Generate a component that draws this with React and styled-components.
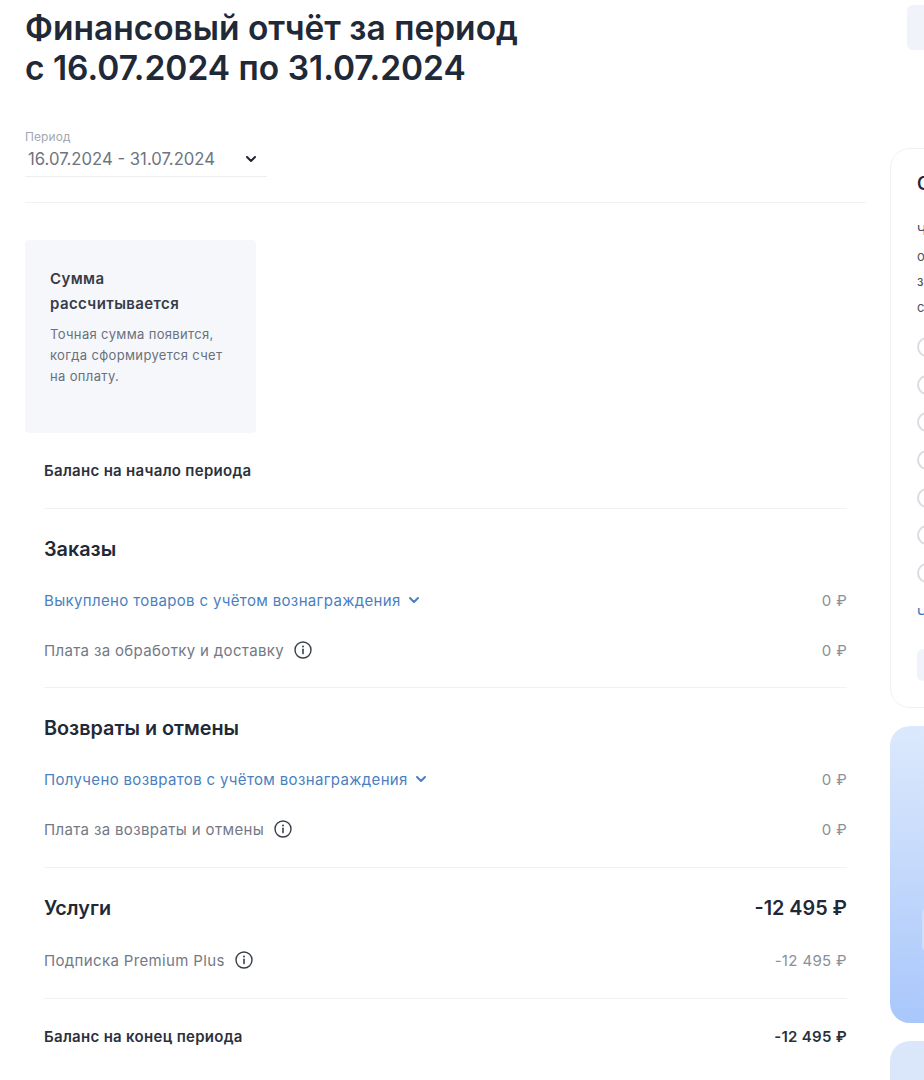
import React from "react";
import styled, { createGlobalStyle } from "styled-components";

const GlobalStyle = createGlobalStyle`
  html, body {
    margin: 0;
    padding: 0;
    background: #fff;
  }
  body {
    font-family: Inter, "Liberation Sans", sans-serif;
    color: #1f2633;
  }
  * {
    box-sizing: border-box;
  }
`;

const Page = styled.div`
  display: flex;
  width: 924px;
  height: 1080px;
  overflow: hidden;
`;

const Main = styled.main`
  flex: 0 0 841px;
  margin-left: 25px;
`;

const Title = styled.h1`
  margin: 8px 0 0;
  font-size: 33.5px;
  line-height: 40px;
  font-weight: 600;
  color: #1f2937;
`;

const PeriodSelect = styled.div`
  width: 242px;
  margin-top: 42px;
  padding-bottom: 7px;
  border-bottom: 1px solid #eceef2;
`;

const PeriodLabel = styled.div`
  font-size: 12px;
  line-height: 14px;
  letter-spacing: 0.1px;
  color: #a3a8b2;
`;

const PeriodValue = styled.div`
  display: flex;
  align-items: center;
  gap: 30px;
  padding-left: 3px;
  margin-top: 5px;
  font-size: 16.7px;
  line-height: 20px;
  color: #6d7480;
`;

const Divider = styled.div`
  height: 1px;
  background: #f1f2f5;
`;

const TopDivider = styled(Divider)`
  margin-top: 25px;
`;

const Notice = styled.div`
  width: 231px;
  height: 193px;
  margin-top: 37px;
  padding: 26px 25px;
  border-radius: 4px;
  background: #f5f7fb;
`;

const NoticeTitle = styled.div`
  font-size: 15px;
  line-height: 25px;
  font-weight: 600;
  letter-spacing: 0.4px;
  color: #363c48;
`;

const NoticeText = styled.div`
  margin-top: 8px;
  font-size: 13px;
  line-height: 21px;
  letter-spacing: 0.35px;
  color: #6a707c;
`;

const Section = styled.section`
  padding: 0 19px;
`;

const TotalRow = styled.div`
  display: flex;
  justify-content: space-between;
  align-items: center;
  height: 75px;
  font-size: 15px;
  font-weight: 600;
  letter-spacing: 0.3px;
  color: #2b313c;
`;

const SectionHead = styled.div`
  display: flex;
  justify-content: space-between;
  align-items: center;
  height: 41px;
  margin-top: 19.5px;
  font-size: 19.8px;
  font-weight: 600;
  color: #1f2937;
`;

const Rows = styled.div`
  padding: ${(p) => p.$top}px 0 ${(p) => p.$bottom}px;
`;

const Row = styled.div`
  display: flex;
  justify-content: space-between;
  align-items: center;
  height: 50px;
  font-size: 15px;
  letter-spacing: 0.35px;
  color: ${(p) => (p.$link ? "#4a7fc0" : "#737985")};
`;

const RowLabel = styled.span`
  display: inline-flex;
  align-items: center;
  gap: ${(p) => (p.$link ? 7 : 10)}px;
`;

const RowValue = styled.span`
  color: #8a909a;
`;

const Aside = styled.aside`
  flex: 0 0 300px;
  margin-left: 24px;
`;

const TopButton = styled.div`
  width: 200px;
  height: 45px;
  margin: 5px 0 0 17px;
  border-radius: 6px;
  background: #f0f3f9;
`;

const Card = styled.div`
  height: 560px;
  margin-top: 98px;
  padding: 25px 26px;
  border: 1px solid #f0f1f4;
  border-radius: 20px;
`;

const CardTitle = styled.div`
  font-size: 18px;
  line-height: 20px;
  font-weight: 600;
  color: #1f2937;
`;

const CardText = styled.div`
  margin-top: 24px;
  font-size: 13px;
  line-height: 25.7px;
  color: #4a505c;
`;

const Options = styled.div`
  display: flex;
  flex-direction: column;
  gap: 17.7px;
  margin-top: 16px;
`;

const Radio = styled.span`
  display: block;
  width: 20px;
  height: 20px;
  border: 2px solid #d9dce3;
  border-radius: 50%;
`;

const CardLink = styled.div`
  margin-top: 21px;
  font-size: 14px;
  line-height: 20px;
  color: #2f6fc0;
`;

const CardButton = styled.div`
  width: 200px;
  height: 32px;
  margin-top: 25px;
  border-radius: 6px;
  background: #f0f3f9;
`;

const Promo = styled.div`
  height: 297px;
  margin-top: 18px;
  border-radius: 20px;
  padding: 181px 0 0 32px;
  background: linear-gradient(180deg, #dce9fc 0%, #a9c7fb 100%);
`;

const PromoButton = styled.div`
  width: 200px;
  height: 45px;
  border-radius: 6px;
  background: #cfdffb;
`;

const PromoNext = styled.div`
  height: 200px;
  margin-top: 18px;
  border-radius: 20px;
  background: #dae7fb;
`;

const Chevron = ({ size = 12, color = "currentColor" }) => (
  <svg width={size} height={size} viewBox="0 0 12 12" fill="none">
    <path d="M2 4 6 8l4-4" stroke={color} strokeWidth="2" strokeLinecap="round" strokeLinejoin="round" />
  </svg>
);

const InfoIcon = () => (
  <svg width="18" height="18" viewBox="0 0 18 18" fill="none">
    <circle cx="9" cy="9" r="8" stroke="#3a404b" strokeWidth="1.4" />
    <path d="M9 8.2v4.4" stroke="#3a404b" strokeWidth="1.6" strokeLinecap="round" />
    <circle cx="9" cy="5.4" r="1" fill="#3a404b" />
  </svg>
);

const options = [1, 2, 3, 4, 5, 6, 7];

export default function App() {
  return (
    <Page>
      <GlobalStyle />
      <Main>
        <Title>
          Финансовый отчёт за период
          <br />с 16.07.2024 по 31.07.2024
        </Title>
        <PeriodSelect>
          <PeriodLabel>Период</PeriodLabel>
          <PeriodValue>
            16.07.2024 - 31.07.2024
            <Chevron color="#1f2633" />
          </PeriodValue>
        </PeriodSelect>
        <TopDivider />
        <Notice>
          <NoticeTitle>
            Сумма
            <br />
            рассчитывается
          </NoticeTitle>
          <NoticeText>
            Точная сумма появится,
            <br />
            когда сформируется счет
            <br />
            на оплату.
          </NoticeText>
        </Notice>
        <Section>
          <TotalRow>Баланс на начало периода</TotalRow>
          <Divider />
          <SectionHead>Заказы</SectionHead>
          <Rows $top={5.5} $bottom={12}>
            <Row $link>
              <RowLabel $link>
                Выкуплено товаров с учётом вознаграждения
                <Chevron />
              </RowLabel>
              <RowValue>0 ₽</RowValue>
            </Row>
            <Row>
              <RowLabel>
                Плата за обработку и доставку
                <InfoIcon />
              </RowLabel>
              <RowValue>0 ₽</RowValue>
            </Row>
          </Rows>
          <Divider />
          <SectionHead>Возвраты и отмены</SectionHead>
          <Rows $top={5.5} $bottom={13}>
            <Row $link>
              <RowLabel $link>
                Получено возвратов с учётом вознаграждения
                <Chevron />
              </RowLabel>
              <RowValue>0 ₽</RowValue>
            </Row>
            <Row>
              <RowLabel>
                Плата за возвраты и отмены
                <InfoIcon />
              </RowLabel>
              <RowValue>0 ₽</RowValue>
            </Row>
          </Rows>
          <Divider />
          <SectionHead>
            Услуги
            <span>-12 495 ₽</span>
          </SectionHead>
          <Rows $top={6.5} $bottom={13}>
            <Row>
              <RowLabel>
                Подписка Premium Plus
                <InfoIcon />
              </RowLabel>
              <RowValue>-12 495 ₽</RowValue>
            </Row>
          </Rows>
          <Divider />
          <TotalRow>
            Баланс на конец периода
            <span>-12 495 ₽</span>
          </TotalRow>
        </Section>
      </Main>
      <Aside>
        <TopButton />
        <Card>
          <CardTitle>Скачать отчёт</CardTitle>
          <CardText>
            Чтобы получить отчёт,
            <br />
            отметьте нужные разделы
            <br />
            за выбранный период
            <br />
            среди доступных
          </CardText>
          <Options>
            {options.map((id) => (
              <Radio key={id} />
            ))}
          </Options>
          <CardLink>Читать условия</CardLink>
          <CardButton />
        </Card>
        <Promo>
          <PromoButton />
        </Promo>
        <PromoNext />
      </Aside>
    </Page>
  );
}
